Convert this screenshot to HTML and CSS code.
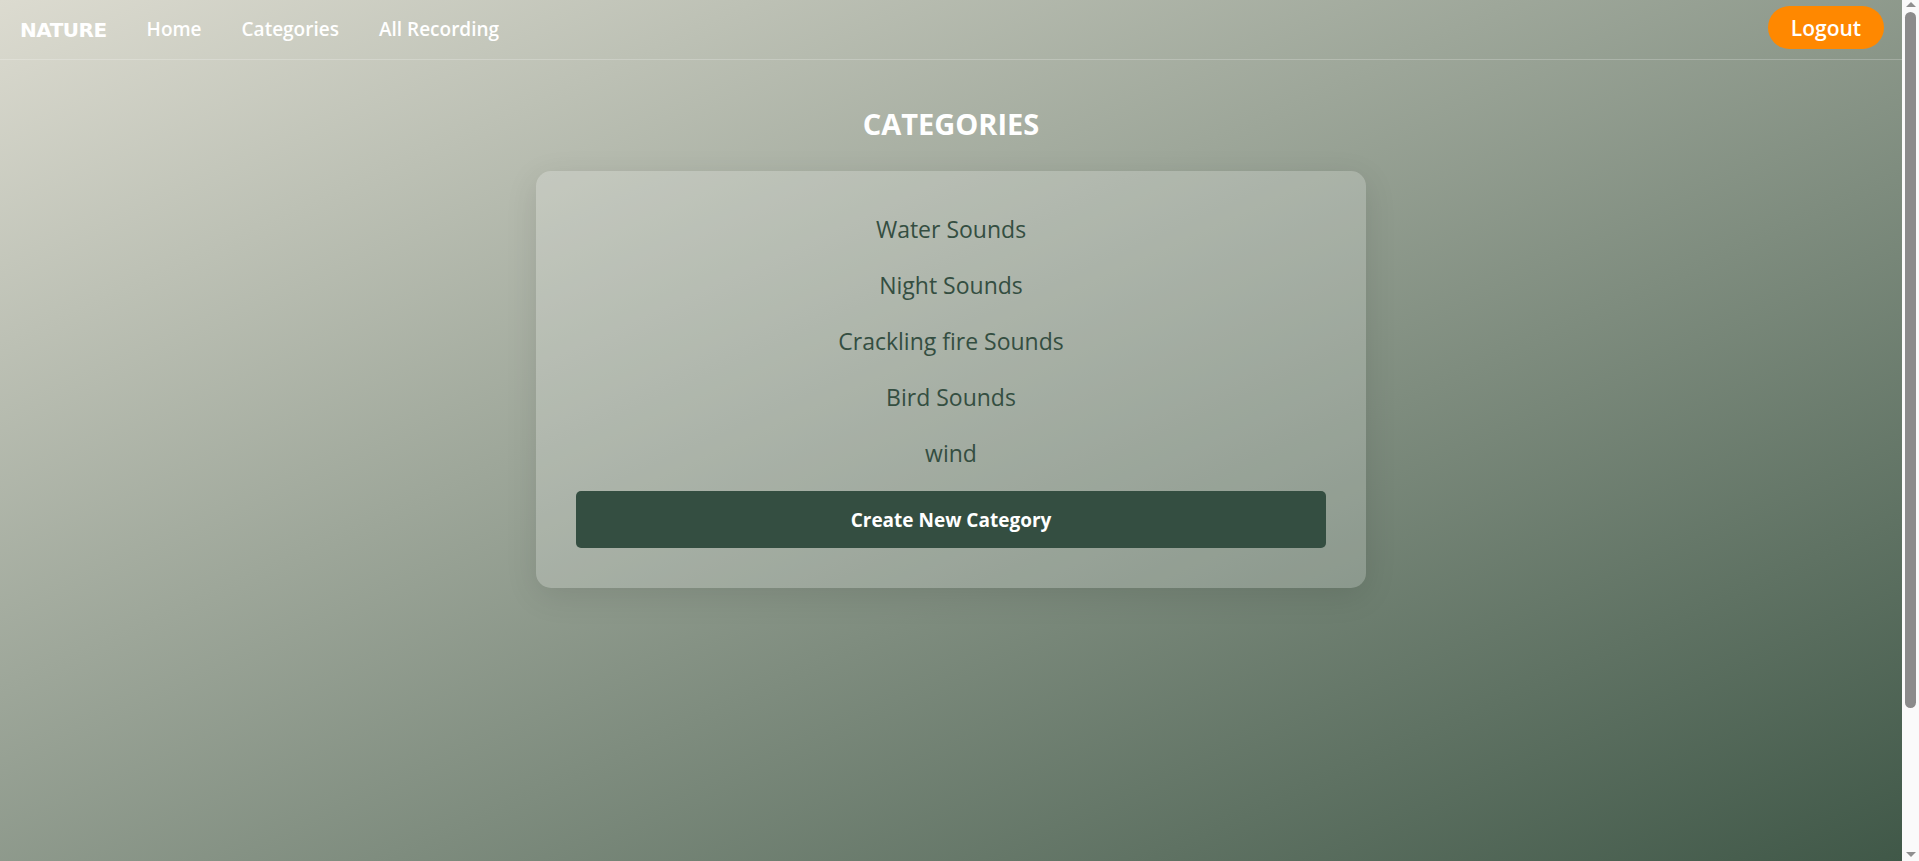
FILE: index.html
```html
<!DOCTYPE html>
<html lang="en">
<head>
<meta charset="utf-8">
<title>Nature - Categories</title>
<link rel="stylesheet" href="styles.css">
</head>
<body>
<div class="app">
  <nav class="navbar">
    <div class="nav-left">
      <a class="brand" href="#">NATURE</a>
      <a class="nav-link" href="#">Home</a>
      <a class="nav-link" href="#">Categories</a>
      <a class="nav-link" href="#">All Recording</a>
    </div>
    <button class="logout">Logout</button>
  </nav>
  <main class="content">
    <h2 class="page-title">CATEGORIES</h2>
    <section class="card">
      <ul class="cat-list">
        <li class="cat-item">Water Sounds</li>
        <li class="cat-item">Night Sounds</li>
        <li class="cat-item">Crackling fire Sounds</li>
        <li class="cat-item">Bird Sounds</li>
        <li class="cat-item">wind</li>
      </ul>
      <button class="create-btn">Create New Category</button>
    </section>
  </main>
</div>
<div class="scrollbar" aria-hidden="true">
  <span class="sb-arrow sb-up"></span>
  <span class="sb-thumb"></span>
  <span class="sb-arrow sb-down"></span>
</div>
</body>
</html>
```

FILE: styles.css
```css
* { box-sizing: border-box; }

html, body { margin: 0; padding: 0; }

body {
  font-family: "Open Sans", "Noto Sans", sans-serif;
  height: 100vh;
  overflow: hidden;
  display: flex;
  color: #344e41;
  background: #fafafa;
}

.app {
  flex: 1;
  height: 100vh;
  overflow: hidden;
  background: linear-gradient(to bottom right, #dcdbd0 0%, #405848 100%);
}

/* scrollbar visual */
.scrollbar {
  width: 17px;
  height: 100vh;
  background: #fafafa;
  display: flex;
  flex-direction: column;
  align-items: center;
  padding: 2px 0 2px;
}

.sb-arrow {
  width: 0;
  height: 0;
  border-left: 5px solid transparent;
  border-right: 5px solid transparent;
}

.sb-up {
  border-bottom: 5px solid #8f8f8f;
}

.sb-down {
  border-top: 5px solid #8f8f8f;
  margin-top: auto;
  margin-bottom: 2px;
}

.sb-thumb {
  width: 11px;
  height: 696px;
  margin-top: 5px;
  border-radius: 6px;
  background: #8b8b8b;
}

.navbar {
  display: flex;
  align-items: center;
  justify-content: space-between;
  height: 60px;
  padding: 0 18px 0 20px;
  border-bottom: 1px solid rgba(255, 255, 255, 0.22);
}

.nav-left {
  display: flex;
  align-items: center;
  gap: 40px;
  margin-top: -2px;
}

.brand {
  font-family: "DejaVu Sans", sans-serif;
  font-weight: bold;
  font-size: 20px;
  color: #ffffff;
  text-decoration: none;
  letter-spacing: -0.5px;
  padding-top: 2px;
}

.nav-link {
  font-size: 19px;
  font-weight: 600;
  color: #ffffff;
  text-decoration: none;
}

.logout {
  font-family: "Open Sans", sans-serif;
  font-size: 21px;
  font-weight: 600;
  color: #ffffff;
  background: #ff8800;
  border: none;
  border-radius: 22px;
  width: 116px;
  height: 43px;
  padding: 0;
  margin-top: -4px;
}

.content {
  min-height: 100vh;
  padding: 45px 20px 103px;
  display: flex;
  flex-direction: column;
  align-items: center;
}

.page-title {
  margin: 0 0 28px;
  font-size: 29px;
  line-height: 38px;
  font-weight: 700;
  color: #ffffff;
}

.card {
  width: 830px;
  padding: 40px;
  background: rgba(255, 255, 255, 0.2);
  border-radius: 15px;
  box-shadow: 0 8px 32px rgba(0, 0, 0, 0.1);
  display: flex;
  flex-direction: column;
  align-items: stretch;
}

.cat-list {
  list-style: none;
  margin: 0 0 22px;
  padding: 2px 0 0;
  display: flex;
  flex-direction: column;
  gap: 24px;
}

.cat-item {
  text-align: center;
  font-size: 23px;
  line-height: 32px;
  font-weight: 500;
  color: #344e41;
}

.create-btn {
  font-family: "Open Sans", sans-serif;
  height: 57px;
  background: #344e41;
  color: #ffffff;
  border: none;
  border-radius: 5px;
  font-size: 19px;
  font-weight: 700;
}
```
